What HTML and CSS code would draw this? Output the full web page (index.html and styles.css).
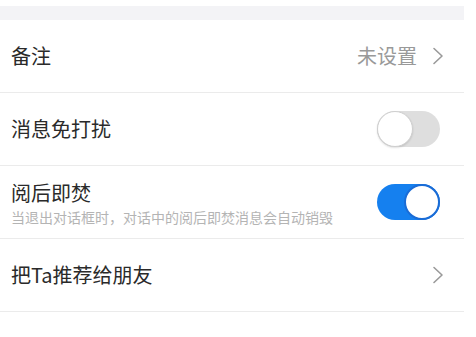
FILE: index.html
```html
<!DOCTYPE html>
<html lang="zh">
<head>
<meta charset="utf-8">
<link rel="stylesheet" href="styles.css">
</head>
<body>
<div class="page">
  <div class="band"></div>
  <div class="row">
    <div class="label">备注</div>
    <div class="right">
      <span class="value">未设置</span>
      <svg class="chev" width="12" height="18" viewBox="0 0 12 18"><path d="M2 1.5 L10 9 L2 16.5" fill="none" stroke="#9a9a9a" stroke-width="1.6" stroke-linecap="round" stroke-linejoin="round"/></svg>
    </div>
  </div>
  <div class="row">
    <div class="label">消息免打扰</div>
    <div class="toggle off"><div class="knob"></div></div>
  </div>
  <div class="row">
    <div class="texts">
      <div class="label">阅后即焚</div>
      <div class="sub">当退出对话框时，对话中的阅后即焚消息会自动销毁</div>
    </div>
    <div class="toggle on"><div class="knob"></div></div>
  </div>
  <div class="row">
    <div class="label">把Ta推荐给朋友</div>
    <div class="right">
      <svg class="chev" width="12" height="18" viewBox="0 0 12 18"><path d="M2 1.5 L10 9 L2 16.5" fill="none" stroke="#9a9a9a" stroke-width="1.6" stroke-linecap="round" stroke-linejoin="round"/></svg>
    </div>
  </div>
</div>
</body>
</html>
```
FILE: styles.css
```css
html, body {
  margin: 0;
  padding: 0;
  background: #ffffff;
}
body {
  font-family: "Noto Sans CJK SC", "Noto Sans", sans-serif;
  color: #2a2a2a;
}
.page {
  width: 464px;
  padding-top: 6px;
}
.band {
  height: 14px;
  background: #f3f3f6;
}
.row {
  height: 72px;
  border-bottom: 1px solid #ebebeb;
  display: flex;
  align-items: center;
  justify-content: space-between;
  padding: 0 23px 0 11px;
}
.label {
  font-size: 20px;
  line-height: 24px;
  color: #2a2a2a;
}
.texts {
  display: flex;
  flex-direction: column;
  gap: 2px;
  padding-top: 3px;
}
.sub {
  font-size: 14px;
  line-height: 20px;
  color: #b4b4b4;
}
.right {
  display: flex;
  align-items: center;
  gap: 15px;
  margin-right: -3px;
}
.value {
  font-size: 20px;
  line-height: 24px;
  color: #999999;
}
.chev {
  display: block;
}
.toggle {
  width: 63px;
  height: 36px;
  border-radius: 18px;
  box-sizing: border-box;
  position: relative;
  margin-right: 1px;
}
.toggle.off {
  background: #dedede;
}
.toggle.on {
  background: #1580ef;
}
.knob {
  position: absolute;
  top: 0;
  width: 36px;
  height: 36px;
  border-radius: 50%;
  background: #ffffff;
  box-sizing: border-box;
}
.off .knob {
  left: 0;
  border: 1.5px solid #cfcfcf;
  box-shadow: 0 1px 2px rgba(0,0,0,0.12);
}
.on .knob {
  right: 0;
  border: 2px solid #1a6cd6;
}
```
